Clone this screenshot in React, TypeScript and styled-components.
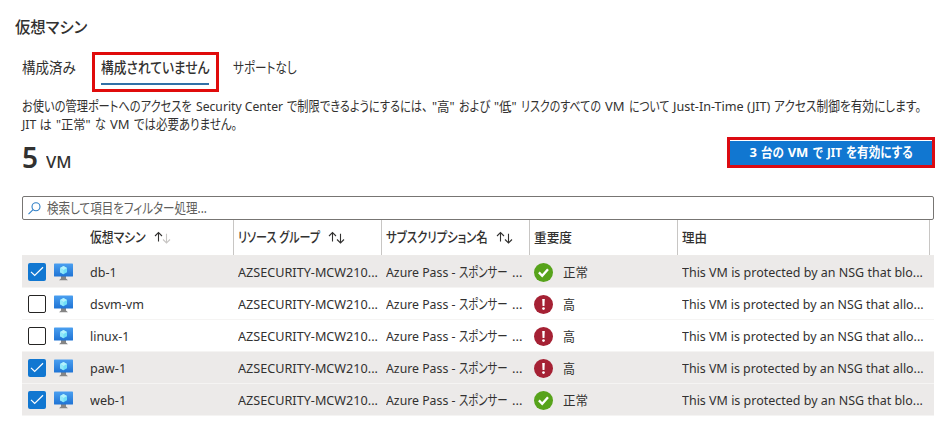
import React, { useLayoutEffect, useRef, useState } from 'react';
import styled, { createGlobalStyle } from 'styled-components';

const GlobalStyle = createGlobalStyle`
  * { box-sizing: border-box; }
  body {
    margin: 0;
    background: #fff;
    color: #323130;
    font-family: "Noto Sans", "Noto Sans CJK JP", sans-serif;
    font-size: 13px;
    line-height: 18px;
  }
`;

const FitBox = styled.span<{ $w: number; $size?: number }>`
  display: inline-block;
  flex: none;
  width: ${p => p.$w}px;
  white-space: pre;
  ${p => p.$size && `font-size: ${p.$size}px;`}
`;

const FitInner = styled.span`
  display: inline-block;
  transform-origin: 0 50%;
  font-feature-settings: "palt";
`;

/* Condenses or expands a run of text to a fixed measure. */
function Fit({ w, size, children }: { w: number; size?: number; children: string }) {
  const ref = useRef<HTMLSpanElement>(null);
  const [scale, setScale] = useState(1);
  useLayoutEffect(() => {
    if (ref.current) setScale(w / ref.current.offsetWidth);
  }, [w, size, children]);
  return (
    <FitBox $w={w} $size={size}>
      <FitInner ref={ref} style={{ transform: `scaleX(${scale})` }}>{children}</FitInner>
    </FitBox>
  );
}

const Page = styled.main`
  width: 941px;
  height: 431px;
  overflow: hidden;
  padding: 15px 7px 0 22px;
  display: flex;
  flex-direction: column;
`;

const Title = styled.h1`
  margin: 0 0 0 -7px;
  height: 24px;
  line-height: 24px;
  font-size: 16px;
  font-weight: 500;
`;

const Tabs = styled.nav`
  display: flex;
  align-items: flex-start;
  margin-top: 13px;
  height: 40px;
`;

const Tab = styled.button`
  border: 0;
  padding: 0;
  background: none;
  color: inherit;
  font: inherit;
  font-size: 14.5px;
  line-height: 20px;
  margin-top: 5px;
  display: flex;
`;

const ActiveTab = styled.div`
  width: 127px;
  height: 40px;
  border: 3px solid #e00b0b;
  margin: 0 14px 0 16px;
  padding: 2px 6px 0;
`;

const ActiveLabel = styled(Tab)`
  margin: 0;
  height: 28px;
  width: 108px;
  font-weight: 500;
  border-bottom: 2px solid #3270a6;
`;

const Description = styled.div`
  margin-top: 5px;
`;

const Line = styled.div`
  display: flex;
  align-items: baseline;
  gap: 4px;
  height: 18px;
`;

const Summary = styled.div`
  display: flex;
  justify-content: space-between;
  height: 59px;
  margin-top: 4px;
`;

const Count = styled.div`
  display: flex;
  align-items: baseline;
  height: 40px;
  line-height: 40px;
  gap: 8px;
  font-size: 28px;
  font-weight: 600;
`;

const Unit = styled.span`
  font-size: 16px;
  font-weight: 500;
`;

const EnableButton = styled.button`
  width: 208px;
  height: 31px;
  margin: 0 -1px 0 0;
  border: 3px solid #dc0b12;
  border-radius: 0;
  padding: 0;
  display: flex;
  align-items: baseline;
  justify-content: center;
  gap: 4px;
  background: linear-gradient(#fff 1px, #1177d1 1px);
  color: #fff;
  font: inherit;
  line-height: 25px;
  font-weight: 700;
`;

const Search = styled.div`
  display: flex;
  align-items: center;
  gap: 6px;
  height: 24px;
  padding-left: 5px;
  border: 1px solid #777573;
  border-radius: 2px;
  color: #605e5c;
`;

const Table = styled.div`
  display: flex;
  flex-direction: column;
`;

const HeaderRow = styled.div`
  display: grid;
  grid-template-columns: 212px 148px 148px 148px 252px 4px;
  height: 36px;
  border-bottom: 1px solid #edebe9;
  font-weight: 500;
`;

const HeaderCell = styled.div<{ $first?: boolean }>`
  display: flex;
  align-items: center;
  gap: 8px;
  padding: 0 0 1px ${p => (p.$first ? 68 : 4)}px;
  border-right: 1px solid #c8c6c4;
`;

const Row = styled.div<{ $selected: boolean }>`
  display: grid;
  grid-template-columns: 32px 36px 148px 148px 148px 148px 1fr;
  align-items: center;
  height: 32px;
  border-bottom: 1px solid #f5f4f3;
  background: ${p => (p.$selected ? '#eceae9' : '#fff')};
  padding-top: 1px;
`;

const Checkbox = styled.span<{ $on: boolean }>`
  display: block;
  width: 18px;
  height: 18px;
  margin-left: 6px;
  border: ${p => (p.$on ? '0' : '1px solid #252423')};
  border-radius: 2px;
  background: ${p => (p.$on ? '#1177d1' : '#fff')};
`;

const Svg = styled.svg`
  display: block;
  flex: none;
`;

const Subscription = styled.div`
  display: flex;
  align-items: baseline;
  gap: 4px;
`;

const Severity = styled.div`
  display: flex;
  align-items: center;
  gap: 10px;
`;

function CheckMark() {
  return (
    <Svg width="18" height="18" viewBox="0 0 18 18" fill="none">
      <path d="M3 8.8 6.7 12.5 15 4.3" stroke="#fff" strokeWidth="1.2" />
    </Svg>
  );
}

function VmIcon() {
  return (
    <Svg width="19" height="18" viewBox="0 0 19 18">
      <defs>
        <linearGradient id="screen" x1="0" y1="0" x2="0" y2="1">
          <stop offset="0" stopColor="#4a9ff0" />
          <stop offset="1" stopColor="#1f73d4" />
        </linearGradient>
      </defs>
      <path d="M7 13h5v2.6l2 1.6H5l2-1.6z" fill="#858585" />
      <rect y="0.6" width="19" height="13" rx="0.7" fill="url(#screen)" />
      <path d="m9.5 3 3.5 2v4.2l-3.5 2-3.5-2V5z" fill="#70dff7" />
      <path d="m9.5 3 3.5 2-3.5 2.1L6 5z" fill="#b4f1fc" />
      <path d="M6 5l3.5 2.1v4.1L6 9.2z" fill="#92e8fa" />
    </Svg>
  );
}

function OkIcon() {
  return (
    <Svg width="19" height="19" viewBox="0 0 19 19">
      <circle cx="9.5" cy="9.5" r="9.5" fill="#57a31b" />
      <path d="m4.9 9.4 3.3 3.4 5.8-6.6" fill="none" stroke="#fff" strokeWidth="2.3" />
    </Svg>
  );
}

function AlertIcon() {
  return (
    <Svg width="19" height="19" viewBox="0 0 19 19">
      <circle cx="9.5" cy="9.5" r="9.5" fill="#a52134" />
      <path d="M8.2 4h2.6l-.35 7.1h-1.9z" fill="#fff" />
      <circle cx="9.5" cy="13.6" r="1.35" fill="#fff" />
    </Svg>
  );
}

function SortArrows({ ascending = false }: { ascending?: boolean }) {
  return (
    <Svg width="17" height="13" viewBox="0 0 17 13" fill="none" strokeWidth="1.1">
      <path d="M4.5 10.5V1.5M1 5l3.5-3.5L8 5" stroke="#323130" />
      <path d="M12.5 2.8V12M9 8.5l3.5 3.5L16 8.5" stroke={ascending ? '#c8c6c4' : '#323130'} />
    </Svg>
  );
}

function SearchIcon() {
  return (
    <Svg width="13" height="13" viewBox="0 0 13 13" fill="none" stroke="#2f7fc6" strokeWidth="1.1">
      <circle cx="8" cy="4.7" r="4" />
      <path d="M5.1 7.6.5 12.2" />
    </Svg>
  );
}

const rows = [
  { name: 'db-1', nameWidth: 27, selected: true, high: false, ending: 'blo...', width: 241 },
  { name: 'dsvm-vm', nameWidth: 54, selected: false, high: true, ending: 'allo...', width: 242 },
  { name: 'linux-1', nameWidth: 39, selected: false, high: true, ending: 'allo...', width: 242 },
  { name: 'paw-1', nameWidth: 36, selected: true, high: true, ending: 'allo...', width: 242 },
  { name: 'web-1', nameWidth: 36, selected: true, high: false, ending: 'blo...', width: 241 },
];

export default function App() {
  return (
    <>
      <GlobalStyle />
      <Page>
        <Title><Fit w={72}>仮想マシン</Fit></Title>
        <Tabs>
          <Tab><Fit w={54}>構成済み</Fit></Tab>
          <ActiveTab><ActiveLabel><Fit w={108}>構成されていません</Fit></ActiveLabel></ActiveTab>
          <Tab><Fit w={64}>サポートなし</Fit></Tab>
        </Tabs>
        <Description>
          <Line>
            <Fit w={170} size={14}>お使いの管理ポートへのアクセスを</Fit>
            <Fit w={87}>Security Center</Fit>
            <Fit w={141} size={14}>で制限できるようにするには、</Fit>
            <Fit w={23}>"高"</Fit>
            <Fit w={31} size={14}>および</Fit>
            <Fit w={23}>"低"</Fit>
            <Fit w={80} size={14}>リスクのすべての</Fit>
            <Fit w={20}>VM</Fit>
            <Fit w={40} size={14}>について</Fit>
            <Fit w={97}>Just-In-Time (JIT)</Fit>
            <Fit w={147} size={14}>アクセス制御を有効にします。</Fit>
          </Line>
          <Line>
            <Fit w={30}>JIT は</Fit>
            <Fit w={35}>"正常"</Fit>
            <Fit w={11} size={14}>な</Fit>
            <Fit w={20}>VM</Fit>
            <Fit w={103} size={14}>では必要ありません。</Fit>
          </Line>
        </Description>
        <Summary>
          <Count><Fit w={16}>5</Fit><Unit><Fit w={26}>VM</Fit></Unit></Count>
          <EnableButton>
            <Fit w={7}>3</Fit><Fit w={23}>台の</Fit><Fit w={21}>VM</Fit>
            <Fit w={10}>で</Fit><Fit w={15}>JIT</Fit><Fit w={67} size={13.5}>を有効にする</Fit>
          </EnableButton>
        </Summary>
        <Search><SearchIcon /><Fit w={160} size={14}>検索して項目をフィルター処理...</Fit></Search>
        <Table>
          <HeaderRow>
            <HeaderCell $first><Fit w={56} size={13.5}>仮想マシン</Fit><SortArrows ascending /></HeaderCell>
            <HeaderCell><Fit w={82} size={14}>リソース グループ</Fit><SortArrows /></HeaderCell>
            <HeaderCell><Fit w={102} size={14}>サブスクリプション名</Fit><SortArrows /></HeaderCell>
            <HeaderCell><Fit w={38}>重要度</Fit></HeaderCell>
            <HeaderCell><Fit w={25}>理由</Fit></HeaderCell>
          </HeaderRow>
          {rows.map(r => (
            <Row key={r.name} $selected={r.selected}>
              <Checkbox $on={r.selected}>{r.selected && <CheckMark />}</Checkbox>
              <VmIcon />
              <Fit w={r.nameWidth}>{r.name}</Fit>
              <Fit w={140}>AZSECURITY-MCW210...</Fit>
              <Subscription>
                <Fit w={69}>Azure Pass -</Fit>
                <Fit w={49} size={14}>スポンサー</Fit>
                <Fit w={10}>...</Fit>
              </Subscription>
              <Severity>
                {r.high ? <AlertIcon /> : <OkIcon />}
                {r.high ? <Fit w={12}>高</Fit> : <Fit w={25}>正常</Fit>}
              </Severity>
              <Fit w={r.width}>{`This VM is protected by an NSG that ${r.ending}`}</Fit>
            </Row>
          ))}
        </Table>
      </Page>
    </>
  );
}
